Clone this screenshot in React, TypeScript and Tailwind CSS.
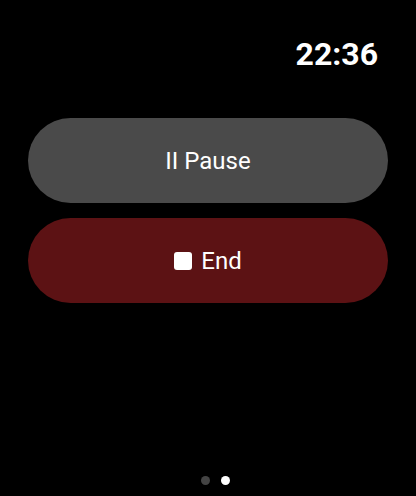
export default function App() {
  return (
    <div
      className="flex h-[496px] w-[416px] flex-col bg-black text-white"
      style={{ fontFamily: "Roboto, Inter, sans-serif" }}
    >
      <div className="flex justify-end pr-[38px] pt-[34px]">
        <span className="text-[32px] font-bold leading-[40px]">22:36</span>
      </div>
      <div className="mt-[44px] flex flex-col gap-[15px] px-[28px]">
        <button
          type="button"
          className="flex h-[85px] items-center justify-center rounded-full bg-[#4a4a4a] text-[24px]"
        >
          II Pause
        </button>
        <button
          type="button"
          className="flex h-[85px] items-center justify-center gap-[9px] rounded-full bg-[#5c1214] text-[24px]"
        >
          <span className="h-[18px] w-[18px] rounded-[3px] bg-white" />
          End
        </button>
      </div>
      <div className="mt-auto flex justify-center gap-[11px] pb-[11px] pl-[15px]">
        <span className="h-[9px] w-[9px] rounded-full bg-[#444]" />
        <span className="h-[9px] w-[9px] rounded-full bg-white" />
      </div>
    </div>
  );
}
